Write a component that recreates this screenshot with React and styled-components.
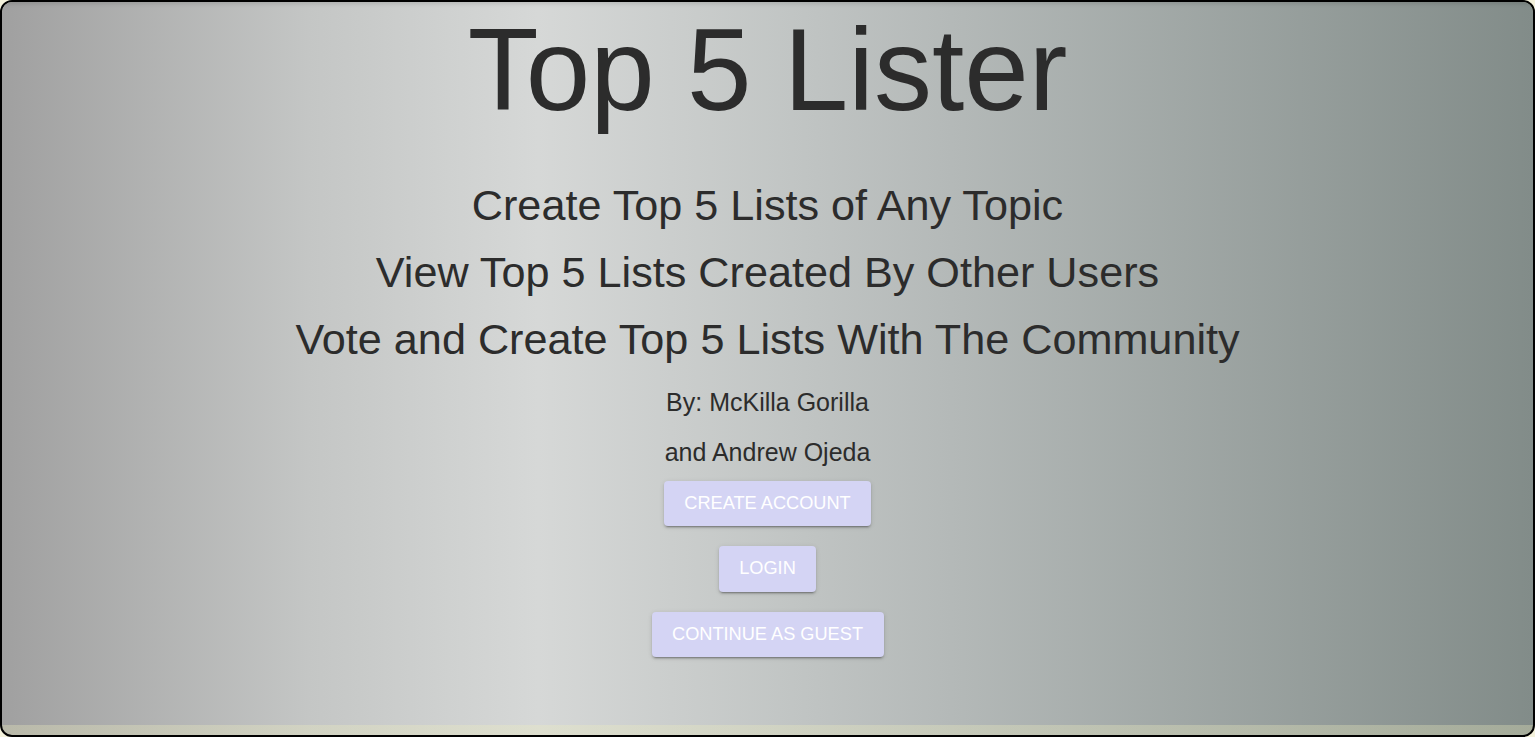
import React from 'react';
import styled, { createGlobalStyle } from 'styled-components';

const GlobalStyle = createGlobalStyle`
  html, body {
    margin: 0;
    padding: 0;
    background: #f4f2dc;
    font-family: "Liberation Sans", Arial, sans-serif;
  }
  * { box-sizing: border-box; }
`;

const mainGradient = 'linear-gradient(90deg, #a0a0a0 0%, #c4c6c5 20%, #d6d8d7 35%, #b4b9b8 62%, #828c89 100%)';

const Frame = styled.div`
  height: 737px;
  border: 2px solid #000;
  border-radius: 12px;
  overflow: hidden;
  display: flex;
  flex-direction: column;
  background: linear-gradient(rgba(238, 238, 190, 0.32), rgba(238, 238, 190, 0.32)), ${mainGradient};
`;

const Panel = styled.main`
  height: 723px;
  flex-shrink: 0;
  background: ${mainGradient};
  box-shadow: inset 0 5px 4px -3px rgba(0, 0, 0, 0.12);
  display: flex;
  flex-direction: column;
  align-items: center;
  color: #2c2c2c;
`;

const Title = styled.h1`
  margin: 0;
  font-size: 116px;
  font-weight: 400;
  line-height: 136px;
`;

const Taglines = styled.div`
  margin-top: 34px;
  display: flex;
  flex-direction: column;
  align-items: center;
`;

const Tagline = styled.div`
  font-size: 43.2px;
  line-height: 67px;
`;

const Credits = styled.div`
  margin-top: 4px;
  display: flex;
  flex-direction: column;
  align-items: center;
`;

const Credit = styled.div`
  font-size: 25px;
  line-height: 50px;
`;

const Buttons = styled.div`
  margin-top: 3.5px;
  display: flex;
  flex-direction: column;
  align-items: center;
  gap: 20px;
`;

const Button = styled.button`
  font-family: "Liberation Sans", Arial, sans-serif;
  font-size: 18.2px;
  line-height: 33.5px;
  text-transform: uppercase;
  color: #fff;
  background: #d4d4f4;
  border: none;
  border-radius: 4px;
  padding: 6px 20.5px;
  cursor: pointer;
  box-shadow: 0px 3px 1px -2px rgba(0, 0, 0, 0.2), 0px 2px 2px 0px rgba(0, 0, 0, 0.14), 0px 1px 5px 0px rgba(0, 0, 0, 0.12);
  &:hover {
    background: #c8c8ee;
  }
`;

export default function App() {
  return (
    <>
      <GlobalStyle />
      <Frame>
        <Panel>
          <Title>Top 5 Lister</Title>
          <Taglines>
            <Tagline>Create Top 5 Lists of Any Topic</Tagline>
            <Tagline>View Top 5 Lists Created By Other Users</Tagline>
            <Tagline>Vote and Create Top 5 Lists With The Community</Tagline>
          </Taglines>
          <Credits>
            <Credit>By: McKilla Gorilla</Credit>
            <Credit>and Andrew Ojeda</Credit>
          </Credits>
          <Buttons>
            <Button>Create Account</Button>
            <Button>Login</Button>
            <Button>Continue As Guest</Button>
          </Buttons>
        </Panel>
      </Frame>
    </>
  );
}
